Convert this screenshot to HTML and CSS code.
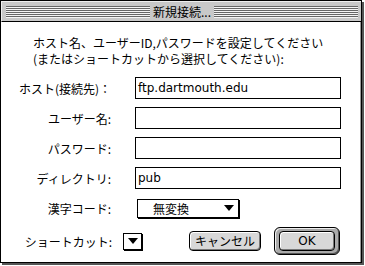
FILE: index.html
```html
<!DOCTYPE html>
<html lang="ja">
<head>
<meta charset="utf-8">
<link rel="stylesheet" href="styles.css">
</head>
<body>
<div class="window">
  <div class="titlebar">
    <div class="stripes"></div>
    <div class="title">新規接続...</div>
    <div class="stripes"></div>
  </div>
  <div class="content">
    <p class="message">ホスト名、ユーザーID,パスワードを設定してください<br>(またはショートカットから選択してください):</p>
    <div class="form">
      <div class="label">ホスト(接続先)：</div>
      <div class="field">ftp.dartmouth.edu</div>
      <div class="label">ユーザー名:</div>
      <div class="field"></div>
      <div class="label">パスワード:</div>
      <div class="field"></div>
      <div class="label">ディレクトリ:</div>
      <div class="field">pub</div>
      <div class="label label-popup">漢字コード:</div>
      <div class="popup"><span class="popup-text">無変換</span><span class="arrow"></span></div>
    </div>
    <div class="bottom-row">
      <div class="label">ショートカット:</div>
      <div class="mini-popup"><span class="arrow"></span></div>
      <div class="spacer"></div>
      <div class="button">キャンセル</div>
      <div class="default-ring"><div class="button ok">OK</div></div>
    </div>
  </div>
</div>
</body>
</html>
```
FILE: styles.css
```css
* { box-sizing: border-box; }
html, body { margin: 0; padding: 0; background: #fff; }
body {
  font-family: "Noto Sans CJK JP", "Noto Sans", sans-serif;
  font-size: 12px;
  color: #000;
  width: 365px;
  height: 266px;
  overflow: hidden;
}
.window {
  width: 362px;
  height: 263px;
  border: 1px solid #000;
  box-shadow: 2px 2px 0 #555;
  background: #fff;
  display: flex;
  flex-direction: column;
}
.titlebar {
  height: 21px;
  background: #c8c8c8;
  border-bottom: 1px solid #000;
  border-top: 1px solid #eee;
  border-left: 1px solid #eee;
  display: flex;
  align-items: center;
  padding: 0 3px 0 4px;
}
.stripes {
  flex: 1;
  height: 12px;
  background: repeating-linear-gradient(to bottom, #666 0, #666 1px, #f4f4f4 1px, #f4f4f4 2px);
}
.title {
  padding: 0 3px;
  line-height: 18px;
  font-size: 12px;
  background: #c8c8c8;
}
.content {
  flex: 1;
  border-right: 1px solid #999;
  padding: 13px 0 0 0;
}
.message {
  margin: 0 0 0 32px;
  line-height: 16px;
  white-space: nowrap;
}
.form {
  display: grid;
  grid-template-columns: 110px 206px;
  column-gap: 24px;
  row-gap: 8px;
  margin-top: 10px;
  grid-auto-rows: 22px;
  align-items: center;
}
.label {
  text-align: right;
  white-space: nowrap;
}
.field {
  height: 22px;
  border: 1px solid #000;
  padding: 0 0 0 2px;
  line-height: 20px;
  font-family: "DejaVu Sans", sans-serif;
  font-size: 12px;
}
.popup {
  margin-left: 2px;
  width: 102px;
  height: 19px;
  border: 1px solid #000;
  box-shadow: 1px 1px 0 #000;
  display: flex;
  align-items: center;
  padding: 0 4px 0 15px;
  justify-content: space-between;
}
.popup-text { line-height: 17px; }
.arrow {
  width: 0;
  height: 0;
  border-left: 5px solid transparent;
  border-right: 5px solid transparent;
  border-top: 6px solid #000;
}
.bottom-row {
  display: flex;
  align-items: center;
  margin-top: 8px;
  padding-left: 0;
}
.bottom-row .label { width: 111px; }
.mini-popup {
  margin-left: 11px;
  width: 19px;
  height: 17px;
  border: 1px solid #000;
  box-shadow: 1px 1px 0 #000;
  display: flex;
  align-items: center;
  justify-content: center;
}
.spacer { flex: 1; }
.button {
  width: 72px;
  height: 20px;
  border: 1px solid #000;
  border-radius: 4px;
  background: #d8d8d8;
  box-shadow: inset 1px 1px 0 #fff, inset -1px -1px 0 #777;
  text-align: center;
  line-height: 18px;
}
.default-ring {
  margin-left: 13px;
  margin-right: 20px;
  width: 66px;
  height: 28px;
  border: 1px solid #000;
  border-radius: 6px;
  background: #aaa;
  box-shadow: inset 1px 1px 0 #eee, inset -1px -1px 0 #555;
  display: flex;
  align-items: center;
  justify-content: center;
}
.button.ok {
  width: 56px;
  font-family: "DejaVu Sans", sans-serif;
}
```
